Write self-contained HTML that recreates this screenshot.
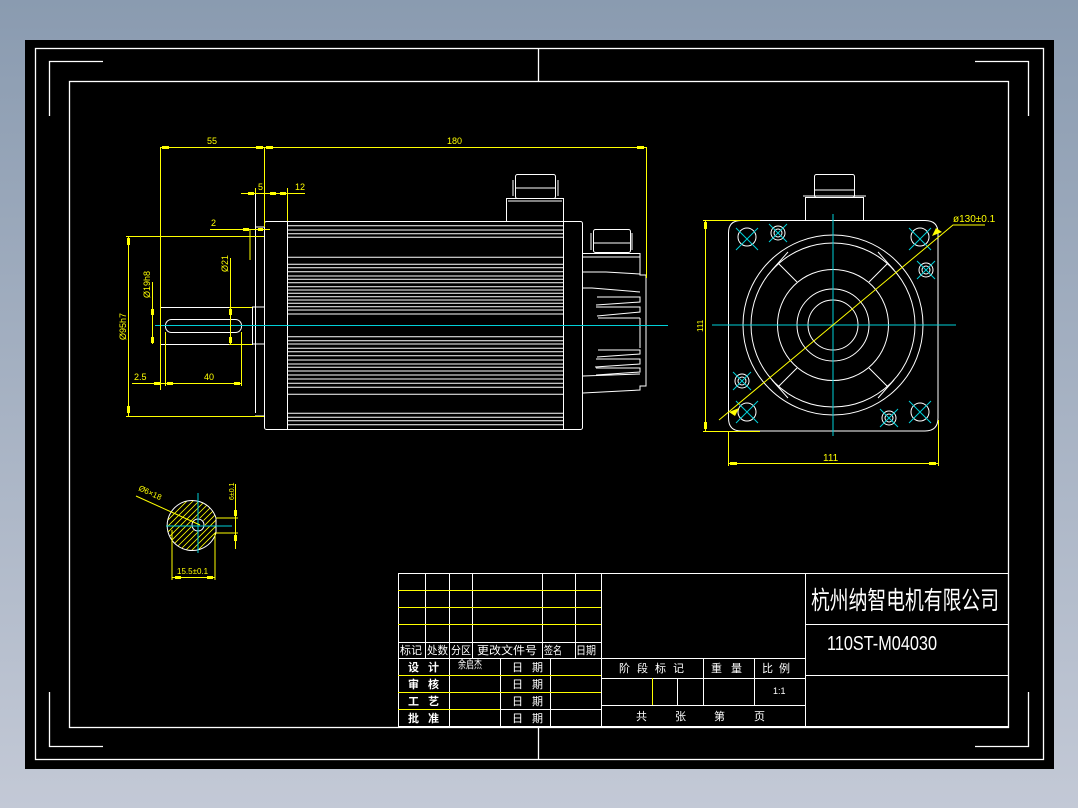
<!DOCTYPE html>
<html><head><meta charset="utf-8"><style>
html,body{margin:0;padding:0;width:1078px;height:808px;overflow:hidden;background:linear-gradient(#8a9bb0,#c3c9d6);}
svg{position:absolute;left:0;top:0}
text{font-family:"Liberation Sans","Noto Sans CJK SC",sans-serif}
</style></head><body>
<svg width="1078" height="808" viewBox="0 0 1078 808" xmlns="http://www.w3.org/2000/svg">
<rect x="25" y="40" width="1029" height="729" fill="#000"/>
<g fill="none" stroke="#fff" stroke-width="1.3">
<rect x="35.5" y="48.5" width="1008" height="711"/>
<rect x="69.5" y="81.5" width="939" height="646"/>
<path d="M49.5 116V61.5H103 M975 61.5H1028.5V116 M49.5 692V746.5H103 M975 746.5H1028.5V692 M538.5 48V81 M538.5 727V759"/>
</g>

<!-- SIDE VIEW -->
<g fill="none" stroke="#fff" stroke-width="1">
<rect x="264.5" y="221.5" width="318" height="208" rx="2"/>
<path d="M287.5 221.5V429.5 M563.5 221.5V429.5"/>
<path d="M287 225.7H563M287 230H563M287 233.7H563M287 237.3H563M287 257.3H563M287 264.3H563M287 267.7H563M287 271.7H563M287 276H563M287 279.3H563M287 282.7H563M287 286.7H563M287 290H563M287 293.3H563M287 296.7H563M287 300H563M287 303.3H563M287 306.7H563M287 310H563M287 314H563M287 336.7H563M287 340.7H563M287 344H563M287 348.3H563M287 351.7H563M287 355.7H563M287 360H563M287 364H563M287 367.3H563M287 371H563M287 375H563M287 379H563M287 383.3H563M287 387.3H563M287 394.3H563M287 413.3H563M287 417.3H563M287 420.7H563M287 424.7H563"/>
<rect x="506.5" y="198.5" width="57" height="23"/>
<path d="M508 201H562"/>
<rect x="515.5" y="174.5" width="40" height="24" rx="2"/>
<path d="M515 188H556 M513 180V196 M558 180V196"/>
<path d="M582.5 253.5H640V275H646V386H640V390L583 393"/>
<path d="M583 257H640 M583 272H606L640 274 M583 288H592L640 292 M597 297H640V302L596 305 M596 307H640V312L597 316 M598 318H640 M640 318V348 M598 350H640V354L597 357 M596 359H640V364L595 367 M596 368H640V372L596 375 M583 376L640 374"/>
<rect x="593.5" y="229.5" width="37" height="23" rx="2"/>
<path d="M593 243H631 M591 233V250 M632 233V250"/>
<path d="M255.5 193V413 M264 227H255 M264 416H255"/>
<rect x="160.5" y="307.5" width="92" height="37"/>
<rect x="165.5" y="319.5" width="76" height="13" rx="6"/>
<path d="M252 307H264 M252 344H264"/>
</g>
<line x1="155" y1="325.5" x2="668" y2="325.5" stroke="#00d0d8" stroke-width="1"/>

<g stroke="#ff0" stroke-width="1" fill="none">
<path d="M160.5 147V390 M264.5 147V227 M646.5 147V278 M160 147.5H646"/>
<path d="M241 193.5H305 M255.5 188V193 M287.5 188V221"/>
<path d="M210 229.5H270 M250 229V260"/>
<path d="M128.5 236V416 M126 236.5H264 M126 416.5H264"/>
<path d="M152.5 282V344"/>
<path d="M230.5 258V344 M229 307.5H252 M229 344.5H252"/>
<path d="M132 383.5H242 M165.5 332V386 M241.5 332V386"/>
</g>
<g fill="#ff0">
<rect x="162" y="146" width="7" height="3"/><rect x="256" y="146" width="7" height="3"/><rect x="266" y="146" width="7" height="3"/><rect x="637" y="146" width="7" height="3"/>
<rect x="248" y="192" width="6" height="3"/><rect x="270" y="192" width="6" height="3"/><rect x="280" y="192" width="6" height="3"/>
<rect x="243" y="228" width="6" height="3"/><rect x="258" y="228" width="5" height="3"/>
<rect x="127" y="238" width="3" height="7"/><rect x="127" y="406" width="3" height="7"/>
<rect x="151" y="309" width="3" height="6"/><rect x="151" y="337" width="3" height="6"/>
<rect x="229" y="309" width="3" height="6"/><rect x="229" y="337" width="3" height="6"/>
<rect x="154" y="382" width="6" height="3"/><rect x="167" y="382" width="6" height="3"/><rect x="234" y="382" width="6" height="3"/>
</g>
<g fill="#ff0" font-size="9">
<text x="207" y="144">55</text><text x="447" y="144">180</text>
<text x="258" y="190">5</text><text x="295" y="190">12</text>
<text x="211" y="226">2</text>
<text x="134" y="380">2.5</text><text x="204" y="380">40</text>
<text transform="translate(126,340) rotate(-90)">Ø95h7</text>
<text transform="translate(150,298) rotate(-90)">Ø19h8</text>
<text transform="translate(228,272) rotate(-90)">Ø21</text>
</g>

<!-- END VIEW -->
<g fill="none" stroke="#fff" stroke-width="1">
<path d="M743 220.5H925Q938 220.5 938 233V418Q938 431 925 431H741Q728.5 431 728.5 418V233Q728.5 220.5 741 220.5Z"/>
<rect x="805.5" y="197.5" width="58" height="23"/>
<rect x="814.5" y="174.5" width="40" height="23" rx="2"/>
<path d="M814 190H855 M803 196H866"/>
<circle cx="833" cy="325" r="90"/><circle cx="833" cy="325" r="82"/>
<circle cx="833" cy="325" r="55.5"/><circle cx="833" cy="325" r="36"/><circle cx="833" cy="325" r="25"/>
<path d="M778 263L797 282 M788 252L772 270 M888 263L869 282 M878 252L894 270 M778 387L797 368 M788 398L772 380 M888 387L869 368 M878 398L894 380"/>
<circle cx="747" cy="237" r="9"/><circle cx="920" cy="237" r="9"/><circle cx="747" cy="412" r="9"/><circle cx="920" cy="412" r="9"/>
<circle cx="778" cy="233" r="7"/><circle cx="778" cy="233" r="4"/>
<circle cx="926" cy="270" r="7"/><circle cx="926" cy="270" r="4"/>
<circle cx="742" cy="381" r="7"/><circle cx="742" cy="381" r="4"/>
<circle cx="889" cy="418" r="7"/><circle cx="889" cy="418" r="4"/>
</g>
<g stroke="#00d0d8" stroke-width="1" fill="none">
<path d="M712 325H956 M833 214V436"/>
<path d="M736 228l22 22M758 228l-22 22M909 228l22 22M931 228l-22 22M736 401l22 22M758 401l-22 22M909 401l22 22M931 401l-22 22"/>
<path d="M769 224l18 18M787 224l-18 18M917 261l18 18M935 261l-18 18M733 372l18 18M751 372l-18 18M880 409l18 18M898 409l-18 18"/>
</g>
<g stroke="#ff0" stroke-width="1" fill="none">
<path d="M719 420L953 225H985"/>
<path d="M705.5 220V431 M703 220.5H760 M703 431.5H760"/>
<path d="M728.5 431V466 M938.5 420V466 M728 463.5H938"/>
</g>
<g fill="#ff0"><path d="M729 412l10-4-4 8z M942 232l-10 4 4-8z"/>
<rect x="704" y="222" width="3" height="7"/><rect x="704" y="422" width="3" height="7"/>
<rect x="730" y="462" width="7" height="3"/><rect x="929" y="462" width="7" height="3"/></g>
<g fill="#ff0" font-size="10"><text x="953" y="222">ø130±0.1</text><text x="823" y="461">111</text>
<text transform="translate(703,332) rotate(-90)" font-size="8">111</text></g>

<!-- CROSS SECTION -->
<defs><clipPath id="cs"><path d="M216 518A25 25 0 1 0 216 533Z"/></clipPath></defs>
<g clip-path="url(#cs)" stroke="#ff0" stroke-width="0.8">
<path d="M112 570l70-70M118 570l70-70M124 570l70-70M130 570l70-70M136 570l70-70M142 570l70-70M148 570l70-70M154 570l70-70M160 570l70-70M166 570l70-70M172 570l70-70M178 570l70-70M184 570l70-70M190 570l70-70M196 570l70-70M202 570l70-70"/>
</g>
<circle cx="198" cy="525" r="7" fill="#000"/>
<g fill="none" stroke="#fff" stroke-width="1">
<path d="M216 518A25 25 0 1 0 216 533Z"/><circle cx="198" cy="525" r="6"/>
</g>
<g stroke="#00d0d8" stroke-width="1"><path d="M166 526H232 M198 493V553"/></g>
<g stroke="#ff0" stroke-width="1" fill="none">
<path d="M172 530V580 M215 533V580 M172 577.5H215 M216 518H238 M216 533H238 M235.5 484V549 M136 496L200 525"/>
</g>
<g fill="#ff0"><rect x="175" y="576" width="6" height="3"/><rect x="207" y="576" width="6" height="3"/>
<rect x="234" y="510" width="3" height="6"/><rect x="234" y="535" width="3" height="6"/></g>
<g fill="#ff0" font-size="8"><text x="177" y="574">15.5±0.1</text>
<text transform="translate(138,490) rotate(25)">Ø6×18</text>
<text transform="translate(234,500) rotate(-90)" font-size="7">6±0.1</text></g>

<!-- TITLE BLOCK -->
<g fill="none" stroke="#fff" stroke-width="1">
<rect x="398.5" y="573.5" width="610" height="153"/>
<path d="M398 642.5H601 M398 658.5H805 M425.5 573V658 M449.5 573V726 M472.5 573V658 M542.5 573V658 M575.5 573V658 M601.5 573V726 M805.5 573V726"/>
<path d="M500.5 658V726 M550.5 658V726 M601 678.5H805 M601 705.5H805 M677.5 678V705 M703.5 658V705 M754.5 658V705 M805 624.5H1008 M805 675.5H1008 M500 709.5H601"/>
</g>
<g stroke="#ff0" stroke-width="1"><path d="M398 590.5H601 M398 607.5H601 M398 624.5H601 M398 675.5H601 M398 692.5H601 M398 709.5H500 M652.5 678V705"/></g>
<g fill="#fff" font-size="11">
<text x="400" y="654" textLength="22" lengthAdjust="spacingAndGlyphs">标记</text>
<text x="427" y="654" textLength="21" lengthAdjust="spacingAndGlyphs">处数</text>
<text x="451" y="654" textLength="20" lengthAdjust="spacingAndGlyphs">分区</text>
<text x="477" y="654" textLength="60" lengthAdjust="spacingAndGlyphs">更改文件号</text>
<text x="544" y="654" textLength="18" lengthAdjust="spacingAndGlyphs">签名</text>
<text x="576" y="654" textLength="20" lengthAdjust="spacingAndGlyphs">日期</text>
<text x="408" y="671" font-weight="bold" letter-spacing="9">设计</text>
<text x="458" y="668" textLength="24" lengthAdjust="spacingAndGlyphs">余启杰</text>
<text x="512" y="671" letter-spacing="9">日期</text>
<text x="408" y="688" font-weight="bold" letter-spacing="9">审核</text><text x="512" y="688" letter-spacing="9">日期</text>
<text x="408" y="705" font-weight="bold" letter-spacing="9">工艺</text><text x="512" y="705" letter-spacing="9">日期</text>
<text x="408" y="722" font-weight="bold" letter-spacing="9">批准</text><text x="512" y="722" letter-spacing="9">日期</text>
<text x="619" y="672" letter-spacing="7">阶段标记</text>
<text x="711" y="672" letter-spacing="9">重量</text>
<text x="762" y="672" letter-spacing="6">比例</text>
<text x="773" y="694" font-size="9">1:1</text>
<text x="636" y="720">共</text><text x="675" y="720">张</text><text x="714" y="720">第</text><text x="754" y="720">页</text>
</g>
<text x="811" y="609" fill="#fff" font-size="25" textLength="188" lengthAdjust="spacingAndGlyphs">杭州纳智电机有限公司</text>
<text x="827" y="650" fill="#fff" font-size="20" textLength="110" lengthAdjust="spacingAndGlyphs" font-family="Liberation Serif,serif">110ST-M04030</text>
</svg>
</body></html>
